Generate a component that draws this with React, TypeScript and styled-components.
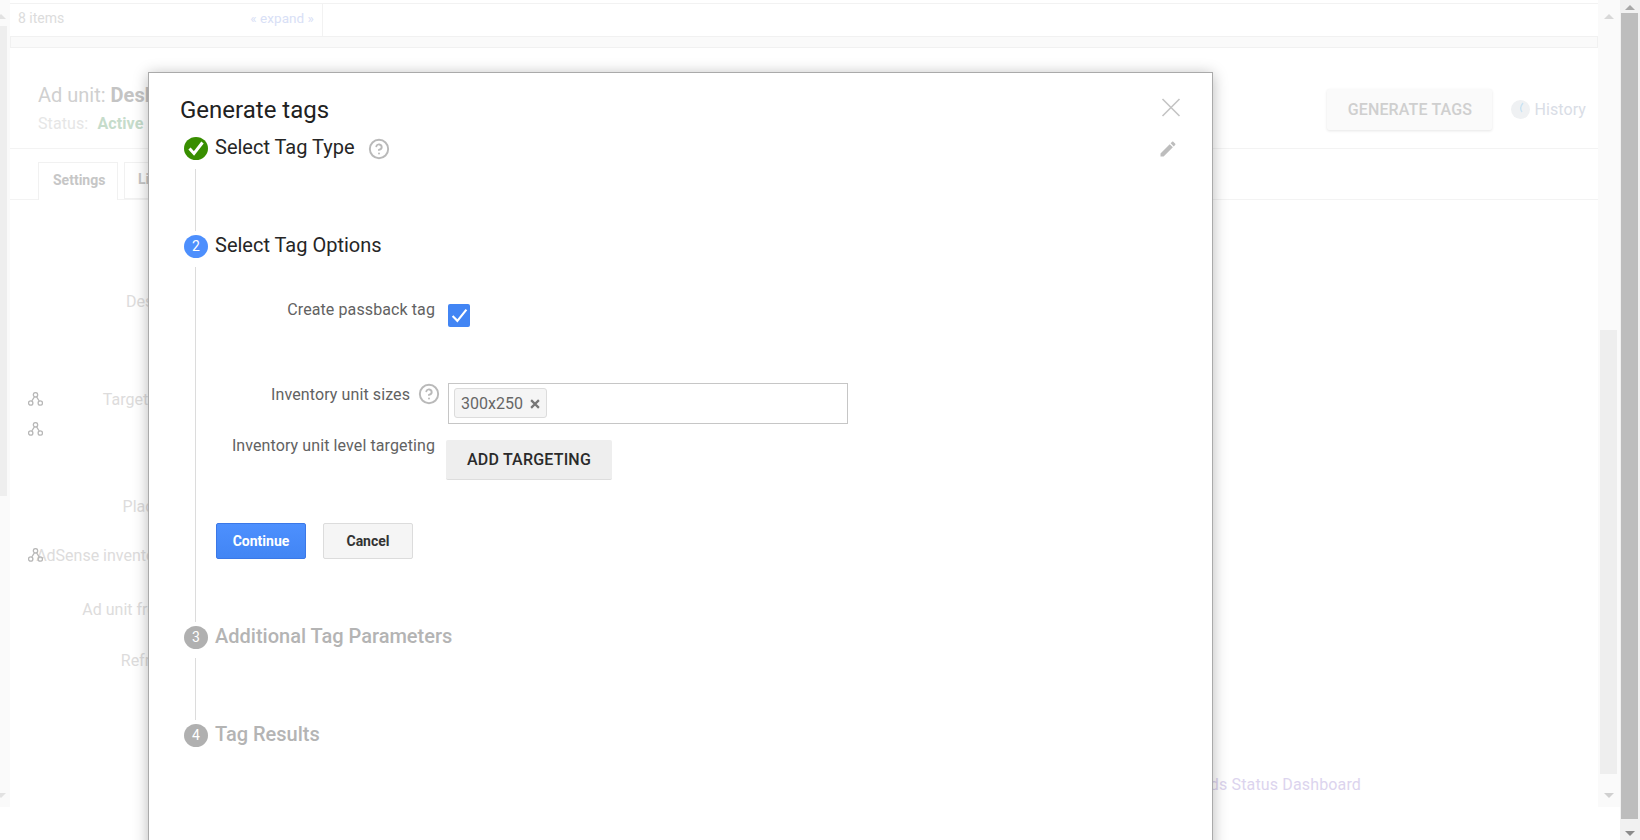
import React from "react";
import styled, { createGlobalStyle } from "styled-components";
import { CircleHelp } from "lucide-react";

const Global = createGlobalStyle`
  html, body { margin: 0; padding: 0; background: #fff; }
  body { font-family: Roboto, "Liberation Sans", sans-serif; }
  * { box-sizing: border-box; }
`;

const Page = styled.div`
  position: relative;
  display: flex;
  width: 1640px;
  height: 840px;
  overflow: hidden;
  background: #fff;
`;

/* scroll rails */
const Rail = styled.div<{ $w: number; $h: number; $bg: string }>`
  flex: none;
  display: flex;
  flex-direction: column;
  align-items: flex-start;
  width: ${(p) => p.$w}px;
  height: ${(p) => p.$h}px;
  background: ${(p) => p.$bg};
  overflow: hidden;
`;
const Thumb = styled.div<{ $w: number; $h: number; $top: number; $left: number; $bg: string }>`
  flex: none;
  width: ${(p) => p.$w}px;
  height: ${(p) => p.$h}px;
  margin: ${(p) => p.$top}px 0 0 ${(p) => p.$left}px;
  background: ${(p) => p.$bg};
`;
const Arrow = styled.div<{ $down?: boolean; $top?: number; $bottom?: number; $left: number; $color: string }>`
  flex: none;
  width: 0;
  height: 0;
  margin-left: ${(p) => p.$left}px;
  margin-top: ${(p) => (p.$top === undefined ? "auto" : `${p.$top}px`)};
  margin-bottom: ${(p) => p.$bottom ?? 0}px;
  border-left: 5px solid transparent;
  border-right: 5px solid transparent;
  ${(p) => (p.$down ? `border-top: 5px solid ${p.$color};` : `border-bottom: 5px solid ${p.$color};`)}
`;

/* dimmed page behind */
const Main = styled.div`
  flex: 1;
  min-width: 0;
  display: flex;
  flex-direction: column;
  font-size: 16px;
`;
const TopRow = styled.div`
  margin-top: 3px;
  height: 33px;
  border-top: 1px solid #f2f2f2;
  display: flex;
`;
const ItemsPanel = styled.div`
  width: 313px;
  padding: 0 8px 4px;
  display: flex;
  align-items: center;
  justify-content: space-between;
  border-right: 1px solid #f2f2f2;
  font-size: 14px;
  color: #dcdcdc;
`;
const Expand = styled.span`
  color: #d8e0f6;
  font-size: 13.5px;
  letter-spacing: 0.05px;
`;
const Strip = styled.div`
  height: 12px;
  background: #fafafa;
  border: 1px solid #f1f1f1;
`;
const Header = styled.div`
  flex: none;
  height: 101px;
  padding: 0 12px 0 28px;
  display: flex;
  align-items: center;
  justify-content: space-between;
  border-bottom: 1px solid #f3f3f3;
`;
const UnitInfo = styled.div`
  display: flex;
  flex-direction: column;
  gap: 8px;
  padding-top: 20px;
`;
const UnitTitle = styled.div`
  font-size: 20px;
  line-height: 24px;
  color: #d0d0d0;
  b { color: #c4c4c4; font-weight: 700; }
`;
const UnitStatus = styled.div`
  font-size: 16px;
  line-height: 18px;
  color: #e6e6e6;
  letter-spacing: 0.1px;
  b { color: #c6dccb; font-weight: 700; margin-left: 5px; }
`;
const HeaderActions = styled.div`
  display: flex;
  align-items: center;
  padding-top: 22px;
`;
const GhostButton = styled.div`
  width: 165px;
  height: 41px;
  display: flex;
  align-items: center;
  justify-content: center;
  background: #fafafa;
  border-radius: 2px;
  box-shadow: 0 1px 3px rgba(0, 0, 0, 0.1);
  color: #cfcfcf;
  font-size: 16px;
  font-weight: 500;
  letter-spacing: 0.15px;
  margin-right: 19px;
`;
const HistoryLink = styled.div`
  display: flex;
  align-items: center;
  gap: 4px;
  color: #d9dde6;
  font-size: 16px;
  letter-spacing: 0.1px;
`;
const Tabs = styled.div`
  flex: none;
  height: 51px;
  padding: 13px 0 0 28px;
  display: flex;
  gap: 6px;
  border-bottom: 1px solid #f3f3f3;
`;
const Tab = styled.div<{ $active?: boolean }>`
  width: ${(p) => (p.$active ? 80 : 100)}px;
  height: ${(p) => (p.$active ? 38 : 37)}px;
  padding: 0 0 4px ${(p) => (p.$active ? 14 : 13)}px;
  display: flex;
  align-items: center;
  background: #fff;
  border: 1px solid #f1f1f1;
  border-bottom: ${(p) => (p.$active ? "none" : "1px solid #f1f1f1")};
  font-size: 14px;
  font-weight: 700;
  color: #c6c6c6;
`;
const Fields = styled.div`
  padding: 0 0 0 18px;
  display: flex;
  flex-direction: column;
`;
const Field = styled.div<{ $gap: number }>`
  width: 179px;
  height: 20px;
  margin-top: ${(p) => p.$gap}px;
  display: grid;
  align-items: center;
  > * { grid-area: 1 / 1; }
`;
const FieldLabel = styled.div`
  justify-self: end;
  white-space: nowrap;
  color: #dddcdc;
  font-size: 16px;
`;
const TreeSvg = styled.svg`
  justify-self: start;
  width: 15px;
  height: 14px;
`;
const Footer = styled.div`
  margin-top: 105px;
  padding-right: 237px;
  text-align: right;
  font-size: 16px;
  letter-spacing: 0.15px;
  line-height: 20px;
  color: #dcd4ee;
`;

const TreeIcon = () => (
  <TreeSvg viewBox="0 0 15 14" fill="none" stroke="#b8b8b8" strokeWidth="1.3">
    <circle cx="7.5" cy="2.8" r="2.2" />
    <circle cx="2.7" cy="11" r="2.2" />
    <circle cx="12.3" cy="11" r="2.2" />
    <path d="M6.4 4.8 3.8 9M8.6 4.8 11.2 9" />
  </TreeSvg>
);

/* modal */
const Modal = styled.div`
  position: absolute;
  left: 148px;
  top: 72px;
  width: 1065px;
  height: 790px;
  background: #fff;
  border: 1px solid #aaa;
  box-shadow: 0 2px 14px rgba(0, 0, 0, 0.28);
  color: #222;
`;
const ModalHead = styled.div`
  height: 30px;
  margin: 22px 31px 12px 31px;
  display: flex;
  align-items: center;
  justify-content: space-between;
`;
const ModalTitle = styled.h1`
  margin: 0;
  font-size: 24px;
  font-weight: 400;
  color: #212121;
`;
const CloseSvg = styled.svg`
  width: 20px;
  height: 19px;
  margin-top: -6px;
`;
const Steps = styled.div`
  padding: 0 34px 0 35px;
`;
const StepHead = styled.div`
  height: 24px;
  display: flex;
  align-items: center;
  gap: 7px;
`;
const Circle = styled.div<{ $bg: string }>`
  flex: none;
  align-self: flex-start;
  width: 24px;
  height: 23px;
  padding-bottom: 2px;
  border-radius: 50%;
  background: ${(p) => p.$bg};
  color: #fff;
  font-size: 14px;
  display: flex;
  align-items: center;
  justify-content: center;
`;
const StepTitle = styled.div<{ $muted?: boolean }>`
  font-size: 20px;
  line-height: 24px;
  margin-top: -5px;
  color: ${(p) => (p.$muted ? "#b4b4b4" : "#262626")};
  font-weight: ${(p) => (p.$muted ? 500 : 400)};
`;
const HeadHelp = styled.span`
  display: flex;
  margin: -1px 0 0 6px;
  color: #b9b9b9;
`;
const EditSvg = styled.svg`
  margin-left: auto;
  width: 20px;
  height: 20px;
`;
const StepBody = styled.div<{ $h: number; $after: number }>`
  margin: 8px 0 ${(p) => p.$after}px 11px;
  height: ${(p) => p.$h}px;
  border-left: 1px solid #dcdcdc;
`;
const FormArea = styled.div`
  padding-top: 37px;
  display: flex;
  flex-direction: column;
`;
const FormRow = styled.div<{ $h: number; $after: number }>`
  height: ${(p) => p.$h}px;
  margin-bottom: ${(p) => p.$after}px;
  display: flex;
  align-items: flex-start;
  gap: 13px;
`;
const FormLabel = styled.div<{ $shift: number }>`
  flex: none;
  width: 239px;
  margin-top: ${(p) => p.$shift}px;
  display: flex;
  justify-content: flex-end;
  align-items: center;
  gap: 8px;
  font-size: 16px;
  letter-spacing: 0.1px;
  line-height: 20px;
  color: #626262;
  white-space: nowrap;
`;
const LabelHelp = styled.span`
  display: flex;
  margin: -2px -5px 0 0;
  color: #b9b9b9;
`;
const Check = styled.div`
  width: 22px;
  height: 23px;
  border-radius: 2px;
  background: #4285f4;
  display: flex;
  align-items: center;
  justify-content: center;
`;
const TagInput = styled.div`
  width: 400px;
  height: 41px;
  padding: 4px 5px;
  border: 1px solid #c6c6c6;
`;
const Chip = styled.div`
  width: 93px;
  height: 30px;
  display: flex;
  align-items: center;
  gap: 7px;
  padding-left: 6px;
  background: #f5f5f5;
  border: 1px solid #dcdcdc;
  border-radius: 3px;
  color: #666;
  font-size: 16px;
`;
const ChipX = styled.svg`
  width: 10px;
  height: 10px;
  margin-top: 2px;
`;
const TargetButton = styled.div`
  margin-left: -2px;
  width: 166px;
  height: 40px;
  display: flex;
  align-items: center;
  justify-content: center;
  background: #eee;
  border-bottom: 1px solid #ddd;
  border-radius: 2px;
  color: #2a2a2a;
  font-size: 16px;
  font-weight: 500;
  letter-spacing: 0.2px;
`;
const Actions = styled.div`
  padding-left: 20px;
  display: flex;
  gap: 17px;
`;
const ActionButton = styled.div<{ $primary?: boolean }>`
  width: 90px;
  height: 36px;
  display: flex;
  align-items: center;
  justify-content: center;
  border-radius: 2px;
  font-size: 14px;
  font-weight: 700;
  border: 1px solid ${(p) => (p.$primary ? "#3b78e7" : "#dcdcdc")};
  background: ${(p) => (p.$primary ? "linear-gradient(#4d90fe, #4285f4)" : "#f5f5f5")};
  color: ${(p) => (p.$primary ? "#fff" : "#333")};
`;

const Close = () => (
  <CloseSvg viewBox="0 0 20 19" fill="none" stroke="#c4c4c4" strokeWidth="1.6">
    <path d="M1.5 1 18.5 18M18.5 1 1.5 18" />
  </CloseSvg>
);

const FieldRow = ({ gap, label, tree }: { gap: number; label?: string; tree?: boolean }) => (
  <Field $gap={gap}>
    {label && <FieldLabel>{label}</FieldLabel>}
    {tree && <TreeIcon />}
  </Field>
);

export default function App() {
  return (
    <Page>
      <Global />
      <Rail $w={10} $h={807} $bg="#fafafa">
        <Arrow $top={14} $left={-4} $color="#e2e2e2" />
        <Thumb $w={7} $h={470} $top={7} $left={0} $bg="#eee" />
        <Arrow $down $bottom={9} $left={-4} $color="#e2e2e2" />
      </Rail>
      <Main>
        <TopRow>
          <ItemsPanel>
            <span>8 items</span>
            <Expand>« expand »</Expand>
          </ItemsPanel>
        </TopRow>
        <Strip />
        <Header>
          <UnitInfo>
            <UnitTitle>
              Ad unit: <b>Desktop</b>
            </UnitTitle>
            <UnitStatus>
              Status: <b>Active</b>
            </UnitStatus>
          </UnitInfo>
          <HeaderActions>
            <GhostButton>GENERATE TAGS</GhostButton>
            <HistoryLink>
              <svg width="19" height="19" viewBox="0 0 19 19">
                <circle cx="9.5" cy="9.5" r="9.5" fill="#eff1f3" />
                <path d="M12 3Q8 8 11 12" fill="none" stroke="#c9e3f3" strokeWidth="1.4" />
              </svg>
              History
            </HistoryLink>
          </HeaderActions>
        </Header>
        <Tabs>
          <Tab $active>Settings</Tab>
          <Tab>Line items</Tab>
        </Tabs>
        <Fields>
          <FieldRow gap={91} label="Description" />
          <FieldRow gap={78} label="Target window" tree />
          <FieldRow gap={10} tree />
          <FieldRow gap={57} label="Placements" />
          <FieldRow gap={29} label="AdSense inventory rules" tree />
          <FieldRow gap={34} label="Ad unit frequency" />
          <FieldRow gap={31} label="Refresh rate" />
        </Fields>
        <Footer>Ads Status Dashboard</Footer>
      </Main>
      <Rail $w={22} $h={807} $bg="#fafafa">
        <Arrow $top={14} $left={6} $color="#d8d8d8" />
        <Thumb $w={17} $h={444} $top={311} $left={2} $bg="#eee" />
        <Arrow $down $bottom={9} $left={6} $color="#d0d0d0" />
      </Rail>
      <Rail $w={20} $h={840} $bg="#f1f1f1">
        <Arrow $top={5} $left={5} $color="#a8a8a8" />
        <Thumb $w={17} $h={806} $top={3} $left={1} $bg="#bdbdbd" />
        <Arrow $down $bottom={4} $left={5} $color="#8c8c8c" />
      </Rail>

      <Modal>
        <ModalHead>
          <ModalTitle>Generate tags</ModalTitle>
          <Close />
        </ModalHead>
        <Steps>
          <StepHead>
            <Circle $bg="#388e00">
              <svg width="18" height="16" viewBox="0 0 18 16" fill="none" stroke="#fff" strokeWidth="3">
                <path d="M2.5 8.5 7 13.5 15.5 2.5" />
              </svg>
            </Circle>
            <StepTitle>Select Tag Type</StepTitle>
            <HeadHelp>
              <CircleHelp size={22} strokeWidth={2.1} />
            </HeadHelp>
            <EditSvg viewBox="0 0 24 24" fill="#bdbdbd">
              <path d="M3 17.25V21h3.75L17.81 9.94l-3.75-3.75L3 17.25zM20.71 7.04c.39-.39.39-1.02 0-1.41l-2.34-2.34c-.39-.39-1.02-.39-1.41 0l-1.83 1.83 3.75 3.75 1.83-1.83z" />
            </EditSvg>
          </StepHead>
          <StepBody $h={62} $after={4} />

          <StepHead>
            <Circle $bg="#4d8ffd">2</Circle>
            <StepTitle>Select Tag Options</StepTitle>
          </StepHead>
          <StepBody $h={355} $after={4}>
            <FormArea>
              <FormRow $h={23} $after={56}>
                <FormLabel $shift={-4}>Create passback tag</FormLabel>
                <Check>
                  <svg width="17" height="15" viewBox="0 0 16 14" fill="none" stroke="#fff" strokeWidth="2">
                    <path d="M1.5 7.5 6 12 14.5 1.5" />
                  </svg>
                </Check>
              </FormRow>
              <FormRow $h={41} $after={16}>
                <FormLabel $shift={2}>
                  Inventory unit sizes
                  <LabelHelp>
                    <CircleHelp size={22} strokeWidth={2.1} />
                  </LabelHelp>
                </FormLabel>
                <TagInput>
                  <Chip>
                    300x250
                    <ChipX viewBox="0 0 9 9" fill="none" stroke="#777" strokeWidth="2">
                      <path d="M1 1l7 7M8 1 1 8" />
                    </ChipX>
                  </Chip>
                </TagInput>
              </FormRow>
              <FormRow $h={40} $after={43}>
                <FormLabel $shift={-4}>Inventory unit level targeting</FormLabel>
                <TargetButton>ADD TARGETING</TargetButton>
              </FormRow>
              <Actions>
                <ActionButton $primary>Continue</ActionButton>
                <ActionButton>Cancel</ActionButton>
              </Actions>
            </FormArea>
          </StepBody>

          <StepHead>
            <Circle $bg="#b0b0b0">3</Circle>
            <StepTitle $muted>Additional Tag Parameters</StepTitle>
          </StepHead>
          <StepBody $h={62} $after={4} />

          <StepHead>
            <Circle $bg="#b0b0b0">4</Circle>
            <StepTitle $muted>Tag Results</StepTitle>
          </StepHead>
        </Steps>
      </Modal>
    </Page>
  );
}
